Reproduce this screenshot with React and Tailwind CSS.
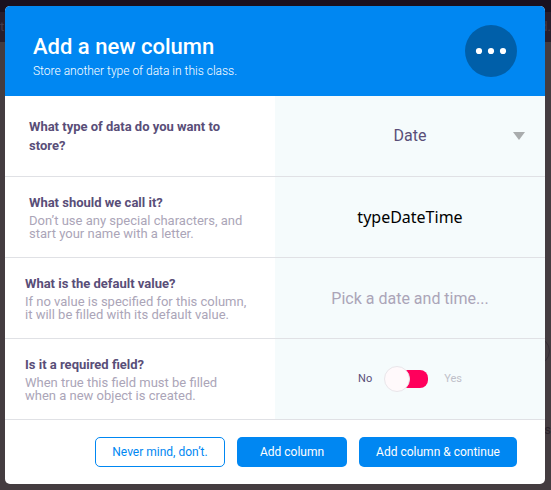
import { useState } from "react";

function Row({ id, title, note, inset = "px-5", children }) {
  return (
    <div className="grid min-h-[81px] grid-cols-2 border-b border-[#e0e1e5]">
      <div className={`flex flex-col justify-center ${inset}`}>
        <label htmlFor={id} className="text-[13px] leading-[19px] font-bold text-[#594e78]">
          {title}
        </label>
        {note && (
          <p className="pt-0.5 pb-0.5 text-[13px] leading-[13px] whitespace-pre-line text-[#aba5b8]">{note}</p>
        )}
      </div>
      <div className="relative flex items-center justify-center bg-[#f5fbfc]">{children}</div>
    </div>
  );
}

function Backdrop() {
  return (
    <div aria-hidden="true" className="absolute inset-0 overflow-hidden text-[13px] text-[#463b48]">
      <div className="h-3 bg-[#1a111f]" />
      <div className="flex h-[30px] items-center justify-between bg-[#291e2b]">
        <span>t</span>
        <span>d.</span>
      </div>
      <div className="absolute top-[337px] right-px h-7 w-7 rounded-full border border-[#352d35]" />
      <span className="absolute top-[420px] right-0 text-[#2c242c]">s</span>
    </div>
  );
}

export default function App() {
  const [required, setRequired] = useState(false);
  return (
    <div className="relative min-h-screen bg-[#443c40] py-1.5 pr-1.5 pl-[5px] font-['Roboto',sans-serif]">
      <Backdrop />
      <form
        className="relative overflow-hidden rounded-[5px] bg-white"
        onSubmit={(e) => e.preventDefault()}
      >
        <header className="flex h-[90px] items-center justify-between bg-[#0087f2] px-7 text-white">
          <div className="pt-3">
            <h1 className="text-[22px] leading-[28px] font-medium">Add a new column</h1>
            <p className="text-[12px] leading-[20px] font-light">Store another type of data in this class.</p>
          </div>
          <svg viewBox="0 0 52 52" className="h-[52px] w-[52px]" aria-hidden="true">
            <circle cx="26" cy="26" r="26" fill="#005fa9" />
            <circle cx="14" cy="26" r="3.1" fill="#fff" />
            <circle cx="26" cy="26" r="3.1" fill="#fff" />
            <circle cx="38" cy="26" r="3.1" fill="#fff" />
          </svg>
        </header>

        <Row id="type" title="What type of data do you want to store?" inset="px-6">
          <select
            id="type"
            className="h-20 w-full appearance-none bg-transparent text-center text-[16px] text-[#594e78] outline-none [text-align-last:center]"
          >
            <option>Date</option>
          </select>
          <svg viewBox="0 0 12 8" className="pointer-events-none absolute right-5 h-2 w-3" aria-hidden="true">
            <path d="M0 0h12L6 8z" fill="#a9acad" />
          </svg>
        </Row>

        <Row
          id="name"
          title="What should we call it?"
          note={"Don’t use any special characters, and\nstart your name with a letter."}
          inset="pl-6"
        >
          <input
            id="name"
            defaultValue="typeDateTime"
            className="h-20 w-full bg-transparent text-center font-['Noto_Sans',sans-serif] text-[16px] text-black outline-none"
          />
        </Row>

        <Row
          id="default"
          title="What is the default value?"
          note={"If no value is specified for this column,\nit will be filled with its default value."}
          inset="pl-5"
        >
          <input
            id="default"
            placeholder="Pick a date and time..."
            className="h-20 w-full bg-transparent text-center text-[16px] text-[#594e78] outline-none placeholder:text-[#aba5b8]"
          />
        </Row>

        <Row
          id="required"
          title="Is it a required field?"
          note={"When true this field must be filled\nwhen a new object is created."}
          inset="pl-5"
        >
          <div className="flex items-center text-[11px]">
            <span className="mr-3 text-[#594e78]">No</span>
            <span className="relative flex h-[26px] w-11 items-center justify-end">
              <input
                id="required"
                type="checkbox"
                checked={required}
                onChange={(e) => setRequired(e.target.checked)}
                className="peer h-[18px] w-10 appearance-none rounded-[8px] bg-[#ff005c] checked:bg-[#00db7c]"
              />
              <span className="pointer-events-none absolute left-0 h-[26px] w-[26px] rounded-full border border-[#e9e6ea] bg-[#fff9fb] peer-checked:right-0 peer-checked:left-auto" />
            </span>
            <span className="ml-4 text-[#bfc0c9]">Yes</span>
          </div>
        </Row>

        <footer className="flex h-16 items-center justify-end gap-3 px-7 text-[12px] whitespace-nowrap">
          <button type="button" className="h-[30px] w-[130px] rounded-[5px] border border-[#0087f2] text-[#0087f2]">
            Never mind, don’t.
          </button>
          <button type="submit" className="h-[30px] w-[110px] rounded-[5px] bg-[#0087f2] text-white">
            Add column
          </button>
          <button type="submit" className="h-[30px] w-[158px] rounded-[5px] bg-[#0087f2] text-white">
            Add column &amp; continue
          </button>
        </footer>
      </form>
    </div>
  );
}
